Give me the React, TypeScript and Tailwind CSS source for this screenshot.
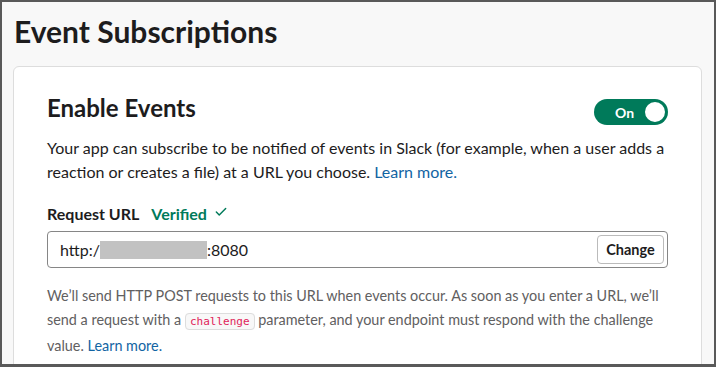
import { Check } from 'lucide-react'

function Toggle() {
  return (
    <div className="mt-[7px] flex h-[26px] w-[74px] items-center justify-between rounded-full bg-[#007a5a] pl-[21px] pr-[1px]">
      <span className="text-[14px] font-bold text-white">On</span>
      <span className="h-[24px] w-[24px] rounded-full border-2 border-[#007a5a] bg-white" />
    </div>
  )
}

export default function App() {
  return (
    <div className="h-[367px] w-[716px] overflow-hidden border-2 border-b-[3px] border-[#595959] bg-[#f8f8f8] font-['Lato',sans-serif] text-[#1d1c1d]">
      <h1 className="pl-[12px] pt-[9px] text-[30px] font-bold leading-[40px]">
        Event Subscriptions
      </h1>
      <div className="ml-[11px] mr-[12px] mt-[15px] h-[400px] rounded-md border border-[#dddddd] bg-white px-[33px] pt-[25px]">
        <div className="flex items-start justify-between">
          <h2 className="text-[24px] font-bold leading-[32px]">Enable Events</h2>
          <Toggle />
        </div>
        <p className="mt-[11px] text-[16px] leading-[24px]">
          Your app can subscribe to be notified of events in Slack (for example, when a user adds a
          reaction or creates a file) at a URL you choose.{' '}
          <span className="text-[#1264a3]">Learn more.</span>
        </p>
        <div className="mt-[18px] flex items-center text-[16px] font-bold leading-[24px]">
          <span>Request URL</span>
          <span className="ml-3 text-[#007a5a]">Verified</span>
          <Check size={14} strokeWidth={2.5} className="ml-[7px] -mt-[5px] text-[#007a5a]" />
        </div>
        <div className="mt-[5px] flex h-[37px] items-center justify-between rounded border border-[#868686] pl-3 pr-[3px]">
          <div className="flex items-center text-[16px]">
            <span>http:/</span>
            <span className="h-[18px] w-[107px] bg-[#c2c2c2]" />
            <span>:8080</span>
          </div>
          <button className="h-[29px] w-[67px] rounded border border-[#bbbbbb] bg-white text-[14.5px] font-bold">
            Change
          </button>
        </div>
        <p className="mt-4 text-[14.4px] leading-[24px] text-[#616061]">
          We’ll send HTTP POST requests to this URL when events occur. As soon as you enter a URL, we’ll
          send a request with a{' '}
          <code className="rounded border border-[#dddddd] bg-[#f8f8f8] px-[4px] py-[1px] font-['DejaVu_Sans_Mono',monospace] text-[11px] text-[#e01e5a]">
            challenge
          </code>{' '}
          parameter, and your endpoint must respond with the challenge value.{' '}
          <span className="text-[#1264a3]">Learn more.</span>
        </p>
      </div>
    </div>
  )
}
